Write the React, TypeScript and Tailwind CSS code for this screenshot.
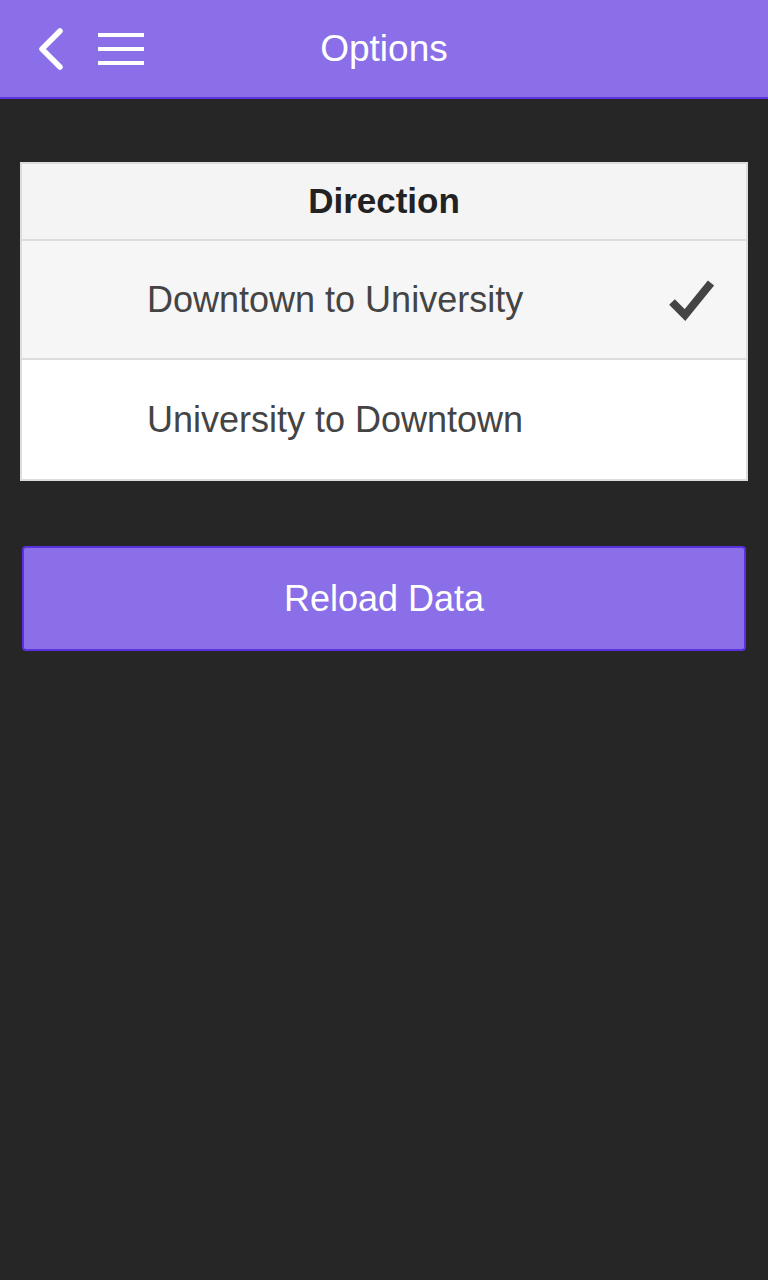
import React from "react";

const DIRECTIONS = [
  { id: "d2u", label: "Downtown to University", selected: true },
  { id: "u2d", label: "University to Downtown", selected: false },
];

export default function App() {
  return (
    <div
      className="min-h-[1280px] w-[768px] bg-[#262626]"
      style={{ fontFamily: '"Liberation Sans", Arial, sans-serif' }}
    >
      {/* header */}
      <div className="relative flex h-[99px] items-center border-b-2 border-[#5b35dd] bg-[#8b6fe8]">
        <button type="button" className="ml-[34px] flex h-[50px] w-[34px] items-center justify-center">
          <svg width="30" height="46" viewBox="0 0 30 46">
            <path
              d="M24 5 L6 23 L24 41"
              fill="none"
              stroke="#fff"
              strokeWidth="5.5"
              strokeLinecap="round"
              strokeLinejoin="round"
            />
          </svg>
        </button>
        <button type="button" className="ml-[30px] flex flex-col gap-[10px]">
          <span className="block h-[4px] w-[46px] bg-white" />
          <span className="block h-[4px] w-[46px] bg-white" />
          <span className="block h-[4px] w-[46px] bg-white" />
        </button>
        <div className="pointer-events-none absolute inset-x-0 top-0 flex h-[97px] items-center justify-center">
          <span className="text-[37px] text-white">Options</span>
        </div>
      </div>

      {/* direction list */}
      <div className="mx-[20px] mt-[63px] border-2 border-[#dcdcdc] bg-white">
        <div className="flex h-[77px] items-center justify-center border-b-2 border-[#dcdcdc] bg-[#f4f4f4]">
          <span className="text-[35px] font-bold text-[#222]">Direction</span>
        </div>
        {DIRECTIONS.map((d, i) => (
          <div
            key={d.id}
            className={`flex h-[119px] items-center pl-[125px] pr-[30px] ${
              i < DIRECTIONS.length - 1 ? "border-b-2 border-[#dcdcdc]" : ""
            } ${d.selected ? "bg-[#f6f6f6]" : "bg-white"}`}
          >
            <span className="flex-1 text-[36px] text-[#444]">{d.label}</span>
            {d.selected && (
              <svg width="48" height="44" viewBox="0 0 48 44">
                <path
                  d="M4 24 L17 37 L43 5"
                  fill="none"
                  stroke="#444"
                  strokeWidth="8"
                  strokeLinejoin="miter"
                />
              </svg>
            )}
          </div>
        ))}
      </div>

      {/* reload */}
      <div className="mx-[22px] mt-[65px]">
        <button
          type="button"
          className="flex h-[105px] w-full items-center justify-center rounded-[4px] border-2 border-[#5a30e0] bg-[#8a6fe8] text-[36px] text-white"
        >
          Reload Data
        </button>
      </div>
    </div>
  );
}
